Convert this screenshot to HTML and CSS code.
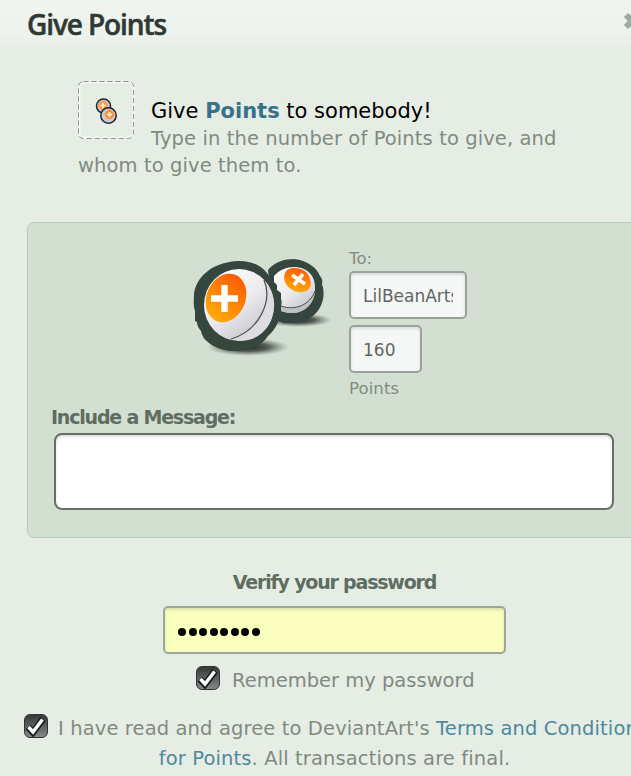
FILE: index.html
```html
<!DOCTYPE html>
<html lang="en">
<head>
  <meta charset="UTF-8">
  <meta name="viewport" content="width=device-width, initial-scale=1.0">
  <title>Give Points</title>
  <link rel="stylesheet" href="styles.css">
</head>
<body>
  <div class="dialog">
    <div class="header">
      <h1>Give Points</h1>
      <svg class="close" width="20" height="20" viewBox="0 0 20 20">
        <path d="M4 4L16 16M16 4L4 16" stroke="#9eaaa2" stroke-width="6"/>
      </svg>
    </div>

    <div class="intro">
      <svg class="intro-icon" width="57" height="58" viewBox="0 0 57 58">
        <rect x="1.500" y="1.500" width="54" height="55" rx="5" fill="none" stroke="#f4f9f3" stroke-width="2"/>
        <rect x=".5" y=".5" width="55" height="57" rx="5" fill="none" stroke="#8b978c" stroke-dasharray="5 3"/>
        <circle cx="25.500" cy="25" r="7" fill="#c9cad8" stroke="#20242a" stroke-width="1.500"/>
        <circle cx="25" cy="24.500" r="4.700" fill="#ff9b45"/>
        <path d="M25 22v5M22.500 24.500h5" stroke="#fff0d8" stroke-width="1.600"/>
        <circle cx="30.500" cy="34.500" r="7.700" fill="#c9cad8" stroke="#20242a" stroke-width="1.500"/>
        <circle cx="31.500" cy="33.500" r="4.700" fill="#ff9138"/>
        <path d="M31.500 31v5M29 33.500h5" stroke="#fff0d8" stroke-width="1.600"/>
      </svg>
      <h2>Give <a href="#">Points</a> to somebody!</h2>
      <p>Type in the number of Points to give, and<br>whom to give them to.</p>
    </div>

    <div class="panel">
      <div class="give">
        <svg class="coins" width="160" height="120" viewBox="0 0 160 120">
          <defs>
            <linearGradient id="ball" x1="0" y1="0" x2=".7" y2="1">
              <stop offset="0" stop-color="#fff"/>
              <stop offset=".55" stop-color="#ececf0"/>
              <stop offset="1" stop-color="#c2c3c8"/>
            </linearGradient>
            <linearGradient id="orange" x1=".6" y1="0" x2=".4" y2="1">
              <stop offset="0" stop-color="#fb5a08"/>
              <stop offset=".55" stop-color="#ff8904"/>
              <stop offset="1" stop-color="#ffad0a"/>
            </linearGradient>
            <radialGradient id="shade">
              <stop offset="0" stop-color="#1c231f"/>
              <stop offset=".5" stop-color="#2c352f" stop-opacity=".75"/>
              <stop offset="1" stop-color="#5e6b61" stop-opacity="0"/>
            </radialGradient>
          </defs>
          <ellipse cx="118" cy="75" rx="34" ry="7" fill="url(#shade)"/>
          <ellipse cx="68" cy="102" rx="41" ry="9" fill="url(#shade)"/>
          <path d="M88 25C94 17 105 14 114 14C127 15 137 23 140 31Q143 34 142 39C146 50 142 62 136 68C128 77 113 79 103 78L94 74Z" fill="#35463f"/>
          <path d="M94 31C99 25 107 22 114 22C128 22 136 32 135 44C135 57 125 68 112 68C108 68 104 67 101 66V48L97 45V40L94 37Z" fill="url(#ball)"/>
          <path d="M101 61C115 66 130 60 135 46C134 60 124 68 112 68C108 68 104 67 101 66Z" fill="#bfc1c5"/>
          <path d="M101 61C115 66 130 60 135 46" fill="none" stroke="#4a4d50" stroke-width="1"/>
          <path d="M105 28C108 21 121 22 127 28C133 36 132 46 123 47C112 49 101 38 105 28Z" fill="url(#orange)"/>
          <path d="M112 30L125 39M123 29L114 40" stroke="#fff" stroke-width="3.600"/>
          <path d="M57 16C72 15 84 22 89 31Q93 34 93 38C96 44 98 47 99 50Q103 54 101 62C101 74 96 84 88 91Q84 98 74 102C56 110 38 105 29 98Q22 93 21 86C15 79 19 77 15 76V66C13 60 14 53 14 49C16 34 29 18 57 16Z" fill="#35463f"/>
          <ellipse cx="59" cy="60" rx="35" ry="36" fill="url(#ball)"/>
          <path d="M84 35C93 56 79 86 51 94C76 102 96 81 94 57C93 47 89 40 84 35Z" fill="#dddde1"/>
          <path d="M84 35C93 56 79 86 51 94" fill="none" stroke="#4b4e50" stroke-width="1.200"/>
          <ellipse cx="46" cy="53" rx="19.500" ry="25" transform="rotate(22 46 53)" fill="url(#orange)"/>
          <path d="M44.500 40V67M31 53.500H58" stroke="#fff" stroke-width="6.400"/>
        </svg>
        <div class="fields">
          <label for="to">To:</label>
          <input type="text" id="to" class="to" value="LilBeanArts">
          <input type="text" id="amount" class="amount" value="160">
          <label for="amount">Points</label>
        </div>
      </div>
      <label class="heading" for="message">Include a Message:</label>
      <textarea id="message"></textarea>
    </div>

    <div class="verify">
      <label class="heading" for="password">Verify your password</label>
      <div class="password"><i></i><i></i><i></i><i></i><i></i><i></i><i></i><i></i></div>
      <div class="remember">
        <span class="check"><svg width="24" height="24" viewBox="0 0 24 24"><path d="M4 13L9 18.500L19 5" fill="none" stroke="#171918" stroke-width="6.500"/><path d="M4.500 13L9 18L18.500 5.500" fill="none" stroke="#fff" stroke-width="3.500"/></svg></span>
        <span>Remember my password</span>
      </div>
    </div>

    <div class="terms">
      <div class="terms-line">
        <span class="check"><svg width="24" height="24" viewBox="0 0 24 24"><path d="M4 13L9 18.500L19 5" fill="none" stroke="#171918" stroke-width="6.500"/><path d="M4.500 13L9 18L18.500 5.500" fill="none" stroke="#fff" stroke-width="3.500"/></svg></span>
        <span>I have read and agree to DeviantArt's <a href="#">Terms and Conditions</a></span>
      </div>
      <div class="terms-end"><a href="#">for Points</a>. All transactions are final.</div>
    </div>
  </div>
</body>
</html>
```
FILE: styles.css
```css
* {
  box-sizing: border-box;
}
body {
  margin: 0;
  height: 776px;
  overflow: hidden;
  background: #e6ede5;
  color: #808b80;
  font-family: Verdana, "DejaVu Sans", sans-serif;
  font-size: 19.5px;
}
h1, h2, p {
  margin: 0;
  font-weight: normal;
}
a {
  color: #4e899c;
  text-decoration: none;
}
.dialog {
  width: 669px;
}
.header {
  display: flex;
  justify-content: space-between;
  height: 81px;
  padding: 7px 27px 0;
  background: linear-gradient(#f0f6ef, #edf3ec 35px, #e6ede5 50px);
}
h1 {
  font: 600 28px/34px "Trebuchet MS", "Open Sans", sans-serif;
  letter-spacing: -1.1px;
  color: #2f3934;
  -webkit-text-stroke: 0.5px #2f3934;
}
.close {
  margin: 4px 0 0;
}
.intro {
  height: 141px;
  padding-left: 78px;
  line-height: 27px;
}
.intro-icon {
  float: left;
  margin-right: 16px;
}
.intro h2 {
  padding-top: 17px;
  font-size: 21px;
  color: #000;
}
.intro h2 a {
  font-weight: bold;
  color: #36738b;
}
.intro p {
  letter-spacing: 0.1px;
}
.panel {
  width: 615px;
  height: 316px;
  margin-left: 27px;
  padding: 22px 23px 0;
  background: #d3dfd1;
  border: 1px solid #b3cdbd;
  border-radius: 7px;
}
.give {
  display: flex;
  height: 159px;
  padding-left: 129px;
}
.fields {
  display: flex;
  flex-direction: column;
  align-items: flex-start;
  margin-left: 9px;
  font-size: 16.5px;
}
.fields label {
  height: 26px;
  line-height: 27px;
  letter-spacing: 0.1px;
}
.fields input {
  height: 48px;
  margin: 0 0 6px;
  padding: 2px 12px 0;
  border: 2px solid #98a499;
  border-radius: 5px;
  background: #f5f7f6;
  box-shadow: inset 0 2px 3px #d9dfda;
  font: 17px Verdana, "DejaVu Sans", sans-serif;
  color: #5f6661;
}
.fields .to {
  width: 118px;
}
.fields .amount {
  width: 73px;
  margin-bottom: 2px;
}
.heading {
  display: block;
  font-size: 19px;
  font-weight: bold;
  line-height: 26px;
  letter-spacing: -1.2px;
  color: #5e6d61;
}
textarea {
  display: block;
  width: 560px;
  height: 77px;
  margin: 3px 0 0 3px;
  border: 2px solid #667068;
  border-radius: 8px;
  background: #fff;
  box-shadow: inset 0 2px 3px #dce1dc;
  resize: none;
}
.verify {
  padding-top: 31px;
}
.verify .heading {
  text-align: center;
}
.password {
  display: flex;
  align-items: center;
  gap: 2.5px;
  width: 343px;
  height: 48px;
  margin: 11px 0 0 163px;
  padding: 4px 0 0 13px;
  border: 2px solid #9ba896;
  border-radius: 5px;
  background: #faffbd;
  box-shadow: inset 0 2px 3px #dce3ac;
}
.password i {
  width: 8px;
  height: 8px;
  border-radius: 50%;
  background: #000;
}
.remember, .terms-line {
  display: flex;
  white-space: nowrap;
}
.remember {
  height: 48px;
  padding: 12px 0 0 196px;
  gap: 12px;
  line-height: 29px;
}
.check {
  flex: none;
  width: 24px;
  height: 24px;
  border: 1px solid #303432;
  border-radius: 6px;
  background: linear-gradient(#343836, #858987);
}
.check svg {
  display: block;
  margin: -1px;
}
.terms {
  padding-top: 12px;
  letter-spacing: 0.12px;
}
.terms-line {
  padding-left: 24px;
  gap: 10px;
  height: 30px;
  line-height: 29px;
}
.terms-end {
  text-align: center;
  line-height: 29px;
}
```
